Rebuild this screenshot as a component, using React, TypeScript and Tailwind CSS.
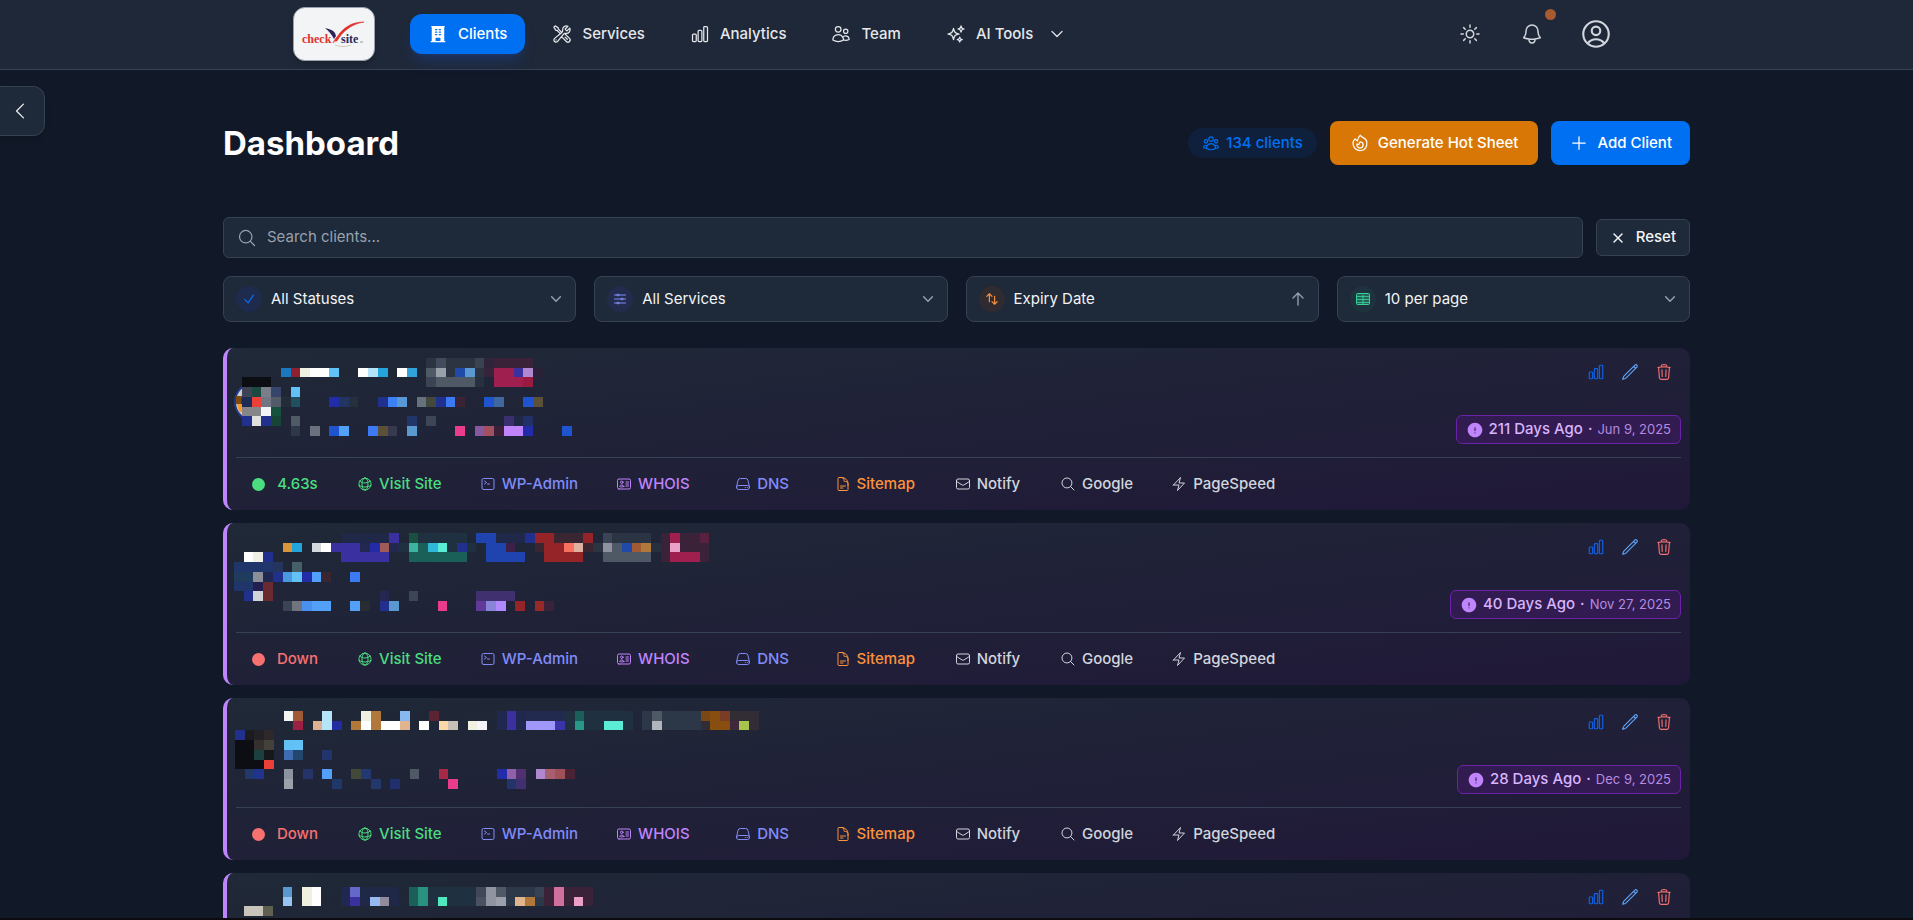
import { useState } from 'react'
import type { ReactNode } from 'react'
import type { IconType } from 'react-icons'
import {
  HiBuildingOffice,
  HiExclamationCircle,
  HiOutlineAdjustmentsHorizontal,
  HiOutlineArrowUp,
  HiOutlineArrowsUpDown,
  HiOutlineBell,
  HiOutlineBolt,
  HiOutlineChartBar,
  HiOutlineCheck,
  HiOutlineChevronDown,
  HiOutlineChevronLeft,
  HiOutlineCommandLine,
  HiOutlineDocumentText,
  HiOutlineEnvelope,
  HiOutlineFire,
  HiOutlineGlobeAlt,
  HiOutlineIdentification,
  HiOutlineMagnifyingGlass,
  HiOutlinePencil,
  HiOutlinePlus,
  HiOutlineServer,
  HiOutlineSparkles,
  HiOutlineSun,
  HiOutlineTrash,
  HiOutlineUserCircle,
  HiOutlineUserGroup,
  HiOutlineUsers,
  HiOutlineWrenchScrewdriver,
  HiOutlineXMark,
} from 'react-icons/hi2'

interface Mosaic {
  x: number
  y: number
  // one string per row, entries are "column[-lastColumn] hex"
  rows: string[]
}

interface Client {
  id: number
  loadTime: string | null
  expiredAgo: string
  expiryDate: string
  mosaic: Mosaic
}

const CELL = 9.7

const clients: Client[] = [
  {
    id: 1,
    loadTime: '4.63s',
    expiredAgo: '211 Days Ago',
    expiryDate: 'Jun 9, 2025',
    mosaic: {
      x: 6,
      y: 2,
      rows: [
        '19 2c3442,20 424b5c,21-23 2c3442,24 3a4350,25 30243a,26-29 3a2238',
        '4 1a78c0,5 8f2030,6 f0f0e0,7-8 ffffff,9 5fc4f5,12 ffffff,13 b5e4f8,14 24a4dc,16 ffffff,17 30a4d8,19 505a66,20 9aa0aa,21 2c3442,22 1f4aa8,23 5a98d0,24 2c3442,25 37243a,26-27 9f1f4f,28 3a30a0,29 b088d0,30 2a2038',
        '0-2 0c0e14,19 3b4454,20-23 4f5966,24 26303e,26-28 9f1f4f,29 9b1b40',
        '0 3d4354,1 1a4a40,2 7a7e8a,3 36456a,5 62c2f5',
        '0 1c2c54,1 ea4038,2 707684,3 535a68,4 232d3a,5 205060,9 222ca8,10 223562,11 25303c,14 20308c,15 3c80f5,16 5a98d5,18 66717e,19 43493a,20 20308c,21 3c7af5,22 3a2434,25 1f54d0,26 4068a0,29 1f54d0,30 5c5038',
        '0-1 85858a,2 f2f3f6,3 16503e',
        '0 20308c,1 e0e0dc,2 20308c,3 184438,5 505a66,17 22356a,19 3c4656,27 3a3070,28 202848,29 22306a',
        '5 2f3848,7 6a7280,9 1f54d0,10 52a0f8,13 3c7af5,14 5c5038,15 37394c,17 5a98d0,22 ea3c8c,24 8558a0,25 a05060,26 3a2038,27-28 c084fc,29 222ca8,33 1f54d0',
      ],
    },
  },
  {
    id: 2,
    loadTime: null,
    expiredAgo: '40 Days Ago',
    expiryDate: 'Nov 27, 2025',
    mosaic: {
      x: -2,
      y: 2,
      rows: [
        '11-15 202848,16 3a30a0,18 1a5040,19-23 1f3040,25-26 1f44b0,27-29 20284a,30 20308c,31-32 952428,33-35 3a2630,36 952428,38 3b4454,39-42 2a3442,44 3a2238,45 9f1f4f,46-47 3a2238,48 5a2040',
        '5 d8963a,6 24a4dc,8 d5d8da,9 ffffff,10-12 3a30a0,13 222850,14 222ca8,15 a05a58,16 222850,17 1f3040,18 3cb4a0,19 1a6058,20 30b8d8,21 5aecd4,22 1f3040,23 20308c,24 1f3040,26-27 1f44b0,28 3c2048,31 3a2630,32-33 952428,34 f87060,35 e0b0a0,36 3a2630,37 2c3442,38 8d92a0,39 4f5966,40 1f4aa8,41 a05a34,42 b0783a,43 26303e,44 3a2238,45 eaa0c8,46-48 3a2238',
        '1 ffffff,2 f0f0e4,3 20308c,11-15 3a30a0,18-23 1a6058,26-29 1f44b0,32-35 952428,38-42 4f5966,44 3a2238,45-47 9f1f4f,48 3a2238',
        '0-3 20356a,4 24345c,6 46606a',
        '0-1 1f3c5c,2 8a8f98,3 202850,4 20308c,5 4a98e0,6 62c2f5,7 222ca8,8 52a0f8,9 3a2630,12 3c7af5',
        '0-1 20356a,2 221e50,3 6a2a30',
        '1 20308c,2 d0d4d6,3 6a2a30,15 242850,18 3c4656,25-28 413070',
        '5 3b4454,6 70747c,7 4a90f0,8-9 52a0f8,12 52a0f8,13 2a2c34,15 20308c,16 5a98d0,21 ea3c8c,25 603a98,26 8a84d8,27 b088ff,29 952428,31 952a28,32 3a2238',
      ],
    },
  },
  {
    id: 3,
    loadTime: null,
    expiredAgo: '28 Days Ago',
    expiryDate: 'Dec 9, 2025',
    mosaic: {
      x: -1,
      y: 5,
      rows: [
        '5 f4f4f2,6 a05a38,9 b5e4f8,13 f0f0e0,14 b0783a,17 88b8f0,20 5a2434,27 202850,28 3a30a0,29 202850,30-33 222a50,34 1f3040,35 1a6058,36-40 1f3040,42 2c3848,43 4f5966,44-47 2c3848,48 7a4814,49 884e10,50 7a3c24,51-53 322c34',
        '6 9b2044,8 dcb090,9 b5e4f8,10 222ca0,12 b0783a,13 ffffff,14 b0783a,15-16 ffffff,17 e0b48c,19 ffffff,21 fad8a8,22 c8c0b4,24 f0f0e0,25 f4f4fa,27 202850,28 3a30a0,29 202850,30-32 a098f8,33 3a34a8,34 1f3040,35 2a9888,36-37 1f3040,38-39 5aecd4,40 1f3040,42 2c3848,43 b0b6bc,44-47 2c3848,48 322c34,49-50 884e10,51 40283c,52 a8c44c,53 322c34',
        '0 20308c,1 1c1c20,2 222226,3 2e2828',
        '0-1 0c0e14,2 33302e,3 43423a,5-6 62c2f5',
        '0-1 0c0e14,2 1c4040,3 16181c,5 3f6cb0,6 224870,9 22346c',
        '0-2 0c0e14,3 ea4038',
        '1 223868,2 20348c,5 8d92a0,7 243468,9 52a0f8,12 43493a,13 243870,18 4f5966,21 a82848,27 222ca8,28 9060a8,29 503070,31 b088d0,32 a86070,33 a05058,34 4a2434',
        '5 9ca0a8,10 203868,14 22386c,16 20306c,22 ea3c8c,28 223468,29 413070',
      ],
    },
  },
  {
    id: 4,
    loadTime: null,
    expiredAgo: '21 Days Ago',
    expiryDate: 'Dec 16, 2025',
    mosaic: {
      x: -2,
      y: 6,
      rows: [
        '5 5a98d0,7 f0f0e0,8 ffffff,11 202850,12 6468c8,13-16 202848,18 1a6058,19 2a9080,20-24 1f3040,25 404858,26 9094a0,27 4f5966,28-30 2c3848,31 384254,32 3a2238,33 d0709c,34-36 3a2238',
        '5 98c4f0,7 f0f0e0,8 ffffff,11 202850,12 3a30a0,13 202848,14 98b8f0,15 908c9c,16 202848,18 1a6058,19 2a9080,20 1f3040,21 50e8c0,22-24 1f3040,25 4a5262,26 9094a0,27 9ca0aa,28 2c3848,29 e0b48c,30 b0783a,31 2c3848,32 3a2238,33 d0709c,34 3a2238,35 eaa0c8,36 3a2238',
        '1-2 c8c4bc,3 606050',
      ],
    },
  },
]

const navItems: { label: string; icon: IconType; active?: boolean; menu?: boolean }[] = [
  { label: 'Clients', icon: HiBuildingOffice, active: true },
  { label: 'Services', icon: HiOutlineWrenchScrewdriver },
  { label: 'Analytics', icon: HiOutlineChartBar },
  { label: 'Team', icon: HiOutlineUsers },
  { label: 'AI Tools', icon: HiOutlineSparkles, menu: true },
]

const siteLinks: { label: string; icon: IconType; color: string }[] = [
  { label: 'Visit Site', icon: HiOutlineGlobeAlt, color: 'text-[#4ade80]' },
  { label: 'WP-Admin', icon: HiOutlineCommandLine, color: 'text-[#818cf8]' },
  { label: 'WHOIS', icon: HiOutlineIdentification, color: 'text-[#c084fc]' },
  { label: 'DNS', icon: HiOutlineServer, color: 'text-[#818cf8]' },
  { label: 'Sitemap', icon: HiOutlineDocumentText, color: 'text-[#fb923c]' },
  { label: 'Notify', icon: HiOutlineEnvelope, color: 'text-gray-300' },
  { label: 'Google', icon: HiOutlineMagnifyingGlass, color: 'text-gray-300' },
  { label: 'PageSpeed', icon: HiOutlineBolt, color: 'text-gray-300' },
]

function Logo() {
  return (
    <a
      href="#"
      aria-label="checksite"
      className="flex h-[54px] w-[82px] items-center justify-center rounded-xl border border-gray-400 bg-gray-100 shadow-md"
    >
      <svg width="80" height="52" viewBox="0 0 80 52" fontFamily="'Liberation Serif', serif" fontWeight="700">
        <text x="8" y="35" fontSize="12" fill="#e0322c">check</text>
        <text x="47" y="35" fontSize="12" fill="#2c2a55">site</text>
        <path d="M31 20c4 1 8 2 10 5l1 3-2 3c-2-4-5-8-9-11z" fill="#2c2458" />
        <path d="M39 35c1-2 2-2 4-2 5-9 14-17 27-19-13 0-21 6-27 15-2 2-3 4-4 6z" fill="#e0322c" stroke="#e0322c" strokeWidth="0.6" />
        <path d="M41 37c5 2 11 2 16 0" stroke="#d6cdb8" fill="none" />
        <path d="M66 34h3" stroke="#999" />
      </svg>
    </a>
  )
}

function TableIcon({ className }: { className: string }) {
  return (
    <svg viewBox="0 0 16 16" fill="none" stroke="currentColor" className={className} aria-hidden="true">
      <rect x="1.5" y="2.5" width="13" height="11" rx="1" fill="currentColor" fillOpacity="0.3" />
      <path d="M1.5 5.5h13M1.5 8.5h13M1.5 11.5h13" strokeOpacity="0.8" />
      <path d="M8 4v9" />
    </svg>
  )
}

function Header() {
  return (
    <header className="border-b border-gray-700 bg-[#1f2838] px-4">
      <div className="mx-auto flex h-[69px] max-w-[1327px] items-center justify-between pb-px">
        <div className="flex items-center gap-[35px]">
          <Logo />
          <nav className="flex items-center gap-[9px]">
            {navItems.map(({ label, icon: Icon, active, menu }) => (
              <a
                key={label}
                href="#"
                className={`flex h-10 items-center gap-2.5 rounded-xl px-[18px] text-[15px] font-medium ${
                  active ? 'bg-[#0070f3] text-white shadow-lg shadow-blue-600/20' : 'text-gray-200'
                }`}
              >
                <Icon className="size-5" />
                {label}
                {menu && <HiOutlineChevronDown strokeWidth={1.8} className="ml-1.5 size-4" />}
              </a>
            ))}
          </nav>
        </div>

        <div className="flex items-center gap-4 text-gray-300">
          <button className="flex size-11 items-center justify-center" title="Toggle theme">
            <HiOutlineSun className="size-6" />
          </button>
          <button className="relative flex size-12 items-center justify-center" title="Notifications">
            <HiOutlineBell className="size-6" />
            <span className="absolute -top-px right-0 size-[11px] rounded-full bg-[#a85a30]" />
          </button>
          <button className="flex size-12 items-center justify-center" title="Account">
            <HiOutlineUserCircle className="size-[34px]" />
          </button>
        </div>
      </div>
    </header>
  )
}

interface FilterProps {
  label: string
  value: string
  tint: string
  icon: ReactNode
  trailing: ReactNode
}

function Filter({ label, value, tint, icon, trailing }: FilterProps) {
  return (
    <div className="flex h-[46px] items-center gap-[9px] rounded-lg border border-gray-700 bg-gray-800 px-3">
      <span className={`flex size-[26px] items-center justify-center rounded-full ${tint}`}>{icon}</span>
      <select aria-label={label} className="flex-1 appearance-none bg-transparent text-[15px] text-gray-100">
        <option>{value}</option>
      </select>
      {trailing}
    </div>
  )
}

function MosaicBlock({ mosaic, avatar }: { mosaic: Mosaic; avatar: boolean }) {
  return (
    <svg width="600" height="101" className="overflow-visible" shapeRendering="crispEdges" aria-hidden="true">
      {avatar && (
        <g shapeRendering="auto">
          <circle cx="18" cy="46" r="19" fill="#c9cbd2" stroke="#1e3a8a" strokeWidth="2" />
          <path d="M0 40h8v8H0z" fill="#7c4a12" />
          <path d="M1 48h7v8H3z" fill="#f59a2c" />
          <path d="M5 42h3v6H5z" fill="#1e3a8a" />
        </g>
      )}
      {mosaic.rows.map((row, r) =>
        row.split(',').map((entry) => {
          const [cols, color] = entry.split(' ')
          const [first, last = first] = cols.split('-').map(Number)
          const x = Math.round(mosaic.x + first * CELL)
          const y = Math.round(mosaic.y + r * CELL)
          return (
            <rect
              key={`${r}-${first}`}
              x={x}
              y={y}
              width={Math.round(mosaic.x + (last + 1) * CELL) - x}
              height={Math.round(mosaic.y + (r + 1) * CELL) - y}
              fill={`#${color}`}
            />
          )
        }),
      )}
    </svg>
  )
}

function ClientCard({ client }: { client: Client }) {
  const online = client.loadTime !== null

  return (
    <article className="rounded-[10px] border-l-4 border-[#c084fc] bg-linear-to-br from-[#1f2937] to-[#201838] px-[9px] pt-2">
      <div className="flex justify-between">
        <MosaicBlock mosaic={client.mosaic} avatar={client.id === 1} />
        <div className="flex flex-col items-end gap-[27px]">
          <div className="flex">
            <button className="flex h-8 w-[34px] items-center justify-center text-[#0f62ea]" title="Analytics">
              <HiOutlineChartBar className="size-[18px]" />
            </button>
            <button className="flex h-8 w-[34px] items-center justify-center text-[#60a5fa]" title="Edit">
              <HiOutlinePencil className="size-[18px]" />
            </button>
            <button className="flex h-8 w-[34px] items-center justify-center text-[#f87171]" title="Delete">
              <HiOutlineTrash className="size-[18px]" />
            </button>
          </div>
          <div className="flex h-[29px] items-center gap-[5px] rounded-md border border-[#6b21a8] bg-[#321b50] px-[9px] text-[#d8b4fe]">
            <HiExclamationCircle className="size-[18px] text-[#c084fc]" />
            <span className="text-[15px] font-medium">{client.expiredAgo}</span>
            <span className="text-[15px] font-medium">·</span>
            <span className="text-[13px] text-[#b48be0]">{client.expiryDate}</span>
          </div>
        </div>
      </div>

      <div className="flex h-[53px] items-center gap-2 border-t border-gray-700 text-[15px] font-medium">
        <span
          className={`flex min-w-[98px] items-center justify-center gap-3 ${online ? 'text-[#4ade80]' : 'text-[#f87171]'}`}
        >
          <span className="size-[13px] rounded-full bg-current" />
          {client.loadTime ?? 'Down'}
        </span>
        {siteLinks.map(({ label, icon: Icon, color }) => (
          <a
            key={label}
            href="#"
            className={`flex min-w-[99px] items-center justify-center gap-1.5 px-[15px] ${color}`}
          >
            <Icon className="size-4" />
            {label}
          </a>
        ))}
      </div>
    </article>
  )
}

export default function App() {
  const [search, setSearch] = useState('')

  return (
    <div className="relative h-screen overflow-hidden bg-[#111827] font-[Inter,sans-serif] text-gray-100">
      <Header />

      {/* Sidebar toggle */}
      <button
        title="Open sidebar"
        className="absolute top-[86px] left-0 flex h-[50px] w-[45px] items-center rounded-r-xl border border-l-0 border-gray-700 bg-gray-800 pl-[9px] text-gray-200 shadow-md"
      >
        <HiOutlineChevronLeft className="size-[22px]" />
      </button>

      <main className="mx-auto w-full max-w-[1467px] pt-[51px]">
        <div className="flex items-center justify-between">
          <h1 className="text-[33px] leading-[44px] font-bold text-white">Dashboard</h1>
          <div className="flex items-center gap-[13px]">
            <span className="flex h-[30px] items-center gap-1.5 rounded-full bg-[#0f203d] px-3.5 text-[15px] font-medium text-[#0070f3]">
              <HiOutlineUserGroup className="size-[18px]" />
              134 clients
            </span>
            <button className="flex h-11 items-center gap-2 rounded-lg bg-[#d97706] px-5 text-[15px] font-medium text-white">
              <HiOutlineFire className="size-5" />
              Generate Hot Sheet
            </button>
            <button className="flex h-11 items-center gap-2 rounded-lg bg-[#0070f3] px-[18px] text-[15px] font-medium text-white">
              <HiOutlinePlus className="size-5" />
              Add Client
            </button>
          </div>
        </div>

        <div className="mt-[52px] flex items-center gap-[13px]">
          <label className="flex h-[41px] flex-1 items-center gap-2.5 rounded-md border border-gray-700 bg-gray-800 px-[13px] text-gray-400">
            <HiOutlineMagnifyingGlass className="size-5" />
            <input
              type="text"
              aria-label="Search clients"
              placeholder="Search clients..."
              value={search}
              onChange={(e) => setSearch(e.target.value)}
              className="flex-1 bg-transparent text-[15px] text-gray-100 outline-none placeholder:text-gray-400"
            />
          </label>
          <button
            onClick={() => setSearch('')}
            className="flex h-[37px] items-center gap-2.5 rounded-md border border-gray-700 bg-gray-800 px-[13px] text-[15px] font-medium"
          >
            <HiOutlineXMark strokeWidth={2.2} className="size-4" />
            Reset
          </button>
        </div>

        <div className="mt-[18px] grid grid-cols-4 gap-[18px]">
          <Filter
            label="Status"
            value="All Statuses"
            tint="bg-[#1e2b4c]"
            icon={<HiOutlineCheck strokeWidth={2} className="size-3.5 text-[#0a6cf5]" />}
            trailing={<HiOutlineChevronDown strokeWidth={2.5} className="size-3.5 text-gray-400" />}
          />
          <Filter
            label="Services"
            value="All Services"
            tint="bg-[#232c4c]"
            icon={<HiOutlineAdjustmentsHorizontal strokeWidth={1.5} className="size-4 text-[#818cf8]" />}
            trailing={<HiOutlineChevronDown strokeWidth={2.5} className="size-3.5 text-gray-400" />}
          />
          <Filter
            label="Sort by"
            value="Expiry Date"
            tint="bg-[#2f2b30]"
            icon={<HiOutlineArrowsUpDown strokeWidth={2} className="size-3.5 text-[#fb923c]" />}
            trailing={
              <button title="Sort ascending">
                <HiOutlineArrowUp strokeWidth={2} className="size-4 text-gray-400" />
              </button>
            }
          />
          <Filter
            label="Page size"
            value="10 per page"
            tint="bg-[#1f333e]"
            icon={<TableIcon className="size-4 text-[#34d399]" />}
            trailing={<HiOutlineChevronDown strokeWidth={2.5} className="size-3.5 text-gray-400" />}
          />
        </div>

        <div className="mt-[26px] flex flex-col gap-[13px]">
          {clients.map((client) => (
            <ClientCard key={client.id} client={client} />
          ))}
        </div>
      </main>

      <div className="absolute inset-x-0 bottom-0 h-0.5 bg-[#0c0c10]" />
    </div>
  )
}
